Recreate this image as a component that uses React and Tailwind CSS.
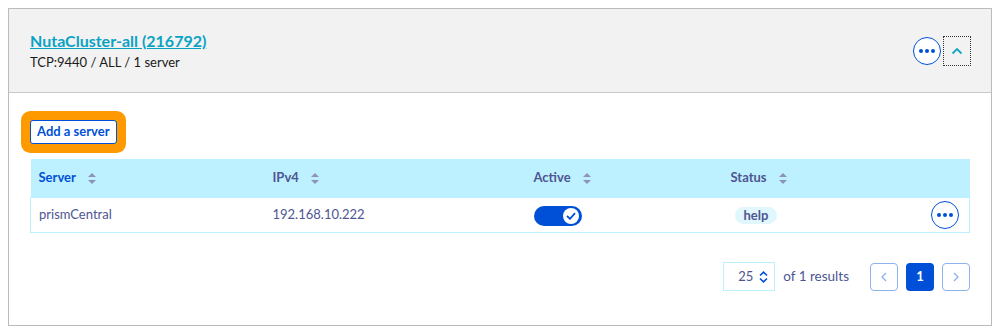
import { useState } from 'react';

function SortIcon() {
  return (
    <svg width="8" height="11" viewBox="0 0 8 11" className="ml-3 inline-block">
      <path d="M4 0 L8 4 H0 Z" fill="#8d92bb" />
      <path d="M4 11 L8 7 H0 Z" fill="#8d92bb" />
    </svg>
  );
}

function DotsButton() {
  return (
    <button className="w-[28px] h-[28px] rounded-full border border-[#0050d7] bg-white flex items-center justify-center gap-[2px]">
      <span className="w-[4px] h-[4px] rounded-full bg-[#0050d7]" />
      <span className="w-[4px] h-[4px] rounded-full bg-[#0050d7]" />
      <span className="w-[4px] h-[4px] rounded-full bg-[#0050d7]" />
    </button>
  );
}

export default function App() {
  const [active, setActive] = useState(true);

  return (
    <div className="pt-2 pl-2 pr-[10px] bg-white" style={{ fontFamily: 'Lato, "Noto Sans", sans-serif' }}>
      <div className="border border-[#bbbbbb] h-[318px]">
        {/* Cluster header */}
        <div className="bg-[#f2f2f2] h-[84px] border-b border-[#c8c8c8] pl-[21px] pr-[20px] flex items-center justify-between">
          <div>
            <a href="#" className="text-[16px] font-bold text-[#0aa2c4] underline leading-[20px] block">
              NutaCluster-all (216792)
            </a>
            <div className="text-[13px] text-[#1a1a1a] leading-[18px] mt-[2px]">TCP:9440 / ALL / 1 server</div>
          </div>
          <div className="flex items-center gap-[2px]">
            <DotsButton />
            <button className="w-[28px] h-[30px] border border-dotted border-[#333] flex items-center justify-center">
              <svg width="12" height="8" viewBox="0 0 12 8">
                <path d="M1.5 6.5 L6 2 L10.5 6.5" stroke="#11a6c4" strokeWidth="1.8" fill="none" />
              </svg>
            </button>
          </div>
        </div>

        {/* Servers */}
        <div className="px-[21px] pt-[25px]">
          <button className="h-[24px] px-[6px] bg-white border border-[#0050d7] rounded-[3px] ring-[9px] ring-[#ff9900] text-[13px] font-bold text-[#0050d7] leading-none">
            Add a server
          </button>

          <table className="w-full mt-[15px] border-collapse text-[13px] table-fixed">
            <thead>
              <tr className="bg-[#bef1ff] h-[39px]">
                <th className="w-[234px] text-left px-2 font-bold text-[#0050d7]">
                  Server<SortIcon />
                </th>
                <th className="w-[261px] text-left px-2 font-bold text-[#4d5592]">
                  IPv4<SortIcon />
                </th>
                <th className="w-[197px] text-left px-2 font-bold text-[#4d5592]">
                  Active<SortIcon />
                </th>
                <th className="text-left px-2 font-bold text-[#4d5592]">
                  Status<SortIcon />
                </th>
              </tr>
            </thead>
            <tbody>
              <tr className="h-[35px] border border-[#bef1ff] text-[#4d5592]">
                <td className="px-2">prismCentral</td>
                <td className="px-2">192.168.10.222</td>
                <td className="px-2">
                  <button
                    onClick={() => setActive(!active)}
                    className="w-[48px] h-[20px] rounded-full bg-[#0050d7] flex items-center justify-end px-[3px] mt-[1px]"
                  >
                    <span className="w-[16px] h-[16px] rounded-full bg-white flex items-center justify-center">
                      <svg width="10" height="8" viewBox="0 0 10 8">
                        <path d="M1 4 L4 6.8 L9 1.2" stroke="#0050d7" strokeWidth="1.8" fill="none" />
                      </svg>
                    </span>
                  </button>
                </td>
                <td className="px-2">
                  <div className="flex items-center justify-between">
                    <span className="ml-[4px] bg-[#dff7fd] rounded-full px-[9px] h-[17px] leading-[17px] font-bold text-[13px]">help</span>
                    <span className="mr-[2px]"><DotsButton /></span>
                  </div>
                </td>
              </tr>
            </tbody>
          </table>

          {/* Pagination */}
          <div className="flex justify-end items-center mt-[29px] text-[13px] text-[#4d5592]">
            <div className="w-[52px] h-[29px] border border-[#bef1ff] flex items-center justify-end pr-[6px] gap-[6px]">
              <span>25</span>
              <svg width="9" height="12" viewBox="0 0 9 12">
                <path d="M1 4.5 L4.5 1.2 L8 4.5 M1 7.5 L4.5 10.8 L8 7.5" stroke="#0050d7" strokeWidth="1.6" fill="none" />
              </svg>
            </div>
            <span className="ml-[8px] mr-[21px] text-[13.5px]">of 1 results</span>
            <div className="flex gap-[8px]">
              <button className="w-[28px] h-[28px] rounded-[4px] border border-[#8eb2ea] flex items-center justify-center">
                <svg width="6" height="10" viewBox="0 0 6 10">
                  <path d="M5 1 L1 5 L5 9" stroke="#8eb2ea" strokeWidth="1.3" fill="none" />
                </svg>
              </button>
              <button className="w-[28px] h-[28px] rounded-[4px] bg-[#0050d7] text-white font-bold">1</button>
              <button className="w-[28px] h-[28px] rounded-[4px] border border-[#8eb2ea] flex items-center justify-center">
                <svg width="6" height="10" viewBox="0 0 6 10">
                  <path d="M1 1 L5 5 L1 9" stroke="#8eb2ea" strokeWidth="1.3" fill="none" />
                </svg>
              </button>
            </div>
          </div>
        </div>
      </div>
    </div>
  );
}
